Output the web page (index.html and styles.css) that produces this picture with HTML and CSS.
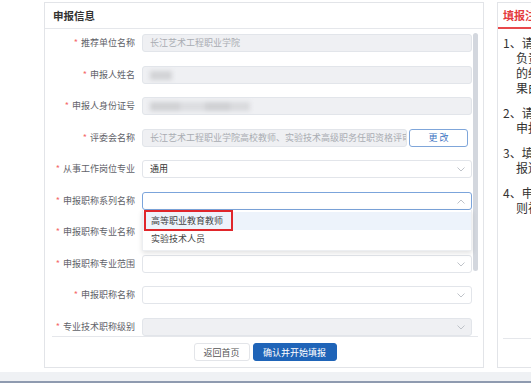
FILE: index.html
```html
<!DOCTYPE html>
<html lang="zh-CN">
<head>
<meta charset="utf-8">
<title>申报信息</title>
<link rel="stylesheet" href="styles.css">
</head>
<body>
<div class="page">
  <main class="layout">
    <section class="card form-card">
      <header class="card-head"><h2>申报信息</h2></header>
      <div class="scroll">
        <div class="form">
          <div class="row">
            <label class="label"><i>*</i>推荐单位名称</label>
            <div class="control disabled">长江艺术工程职业学院</div>
          </div>
          <div class="row">
            <label class="label"><i>*</i>申报人姓名</label>
            <div class="control disabled"><span class="blur short"></span></div>
          </div>
          <div class="row">
            <label class="label"><i>*</i>申报人身份证号</label>
            <div class="control disabled"><span class="blur long"></span></div>
          </div>
          <div class="row">
            <label class="label"><i>*</i>评委会名称</label>
            <div class="with-btn">
              <div class="control disabled">长江艺术工程职业学院高校教师、实验技术高级职务任职资格评审委员会</div>
              <button class="btn-change">更 改</button>
            </div>
          </div>
          <div class="row">
            <label class="label"><i>*</i>从事工作岗位专业</label>
            <div class="control select dark">通用<svg class="chev" viewBox="0 0 8 5"><path d="M0.5 0.5 L4 4 L7.5 0.5" /></svg></div>
          </div>
          <div class="row">
            <label class="label"><i>*</i>申报职称系列名称</label>
            <div class="control select focus"><svg class="chev" viewBox="0 0 8 5"><path d="M0.5 4.5 L4 1 L7.5 4.5" /></svg>
              <ul class="dropdown">
                <li class="hover"><span class="mark"></span>高等职业教育教师</li>
                <li>实验技术人员</li>
              </ul>
            </div>
          </div>
          <div class="row">
            <label class="label"><i>*</i>申报职称专业名称</label>
            <div class="control select"><svg class="chev" viewBox="0 0 8 5"><path d="M0.5 0.5 L4 4 L7.5 0.5" /></svg></div>
          </div>
          <div class="row">
            <label class="label"><i>*</i>申报职称专业范围</label>
            <div class="control select"><svg class="chev" viewBox="0 0 8 5"><path d="M0.5 0.5 L4 4 L7.5 0.5" /></svg></div>
          </div>
          <div class="row">
            <label class="label"><i>*</i>申报职称名称</label>
            <div class="control select"><svg class="chev" viewBox="0 0 8 5"><path d="M0.5 0.5 L4 4 L7.5 0.5" /></svg></div>
          </div>
          <div class="row">
            <label class="label"><i>*</i>专业技术职称级别</label>
            <div class="control select disabled"><svg class="chev" viewBox="0 0 8 5"><path d="M0.5 0.5 L4 4 L7.5 0.5" /></svg></div>
          </div>
        </div>
        <div class="track"><div class="thumb"></div></div>
      </div>
      <div class="actions">
        <button class="btn">返回首页</button>
        <button class="btn primary">确认并开始填报</button>
      </div>
    </section>
    <aside class="card notes">
      <header class="notes-head">填报注意事项</header>
      <ol class="note-list">
        <li>1、请认真核对申报信息，申报人对所填报信息的真实性<br>负责，如因信息填写错误导致无法正常评审<br>的结果，由申报人自行承担，后<br>果由申报人负责。</li>
        <li>2、请按照实际情况选择申报类别<br>申报系列及专业。</li>
        <li>3、填写完成后请及时提交<br>报送审核。</li>
        <li>4、申报信息确认后不可修改，否<br>则视为放弃。</li>
      </ol>
      <div class="notes-foot"></div>
    </aside>
  </main>
  <footer class="bottom"></footer>
</div>
</body>
</html>
```
FILE: styles.css
```css
html, body {
  margin: 0;
  padding: 0;
  width: 531px;
  height: 383px;
  overflow: hidden;
  background: #fff;
}
body {
  font-family: "Noto Sans CJK SC", "Noto Sans", sans-serif;
  color: #333;
}
.page {
  display: flex;
  flex-direction: column;
}
.layout {
  display: flex;
  gap: 13px;
  padding: 2px 0 0 44px;
  height: 366px;
}
.card {
  box-sizing: border-box;
  border: 1px solid #e2e4e8;
  background: #fff;
  flex-shrink: 0;
}
.form-card {
  width: 440px;
  display: flex;
  flex-direction: column;
}
.card-head {
  height: 25px;
  border-bottom: 1px solid #e5e7eb;
  padding-left: 8px;
  display: flex;
  align-items: center;
}
.card-head h2 {
  margin: 0;
  font-size: 10.5px;
  font-weight: 700;
  color: #333;
}
.scroll {
  height: 307px;
  display: flex;
  gap: 1px;
  padding: 0 5px 0 7px;
  overflow: hidden;
}
.form {
  width: 420px;
  padding-top: 5px;
  display: flex;
  flex-direction: column;
  gap: 13.5px;
}
.row {
  display: grid;
  grid-template-columns: 83px 1fr;
  column-gap: 7px;
  align-items: center;
}
.label {
  text-align: right;
  font-size: 9px;
  line-height: 18px;
  color: #5f6269;
  white-space: nowrap;
}
.label i {
  font-style: normal;
  color: #f56c6c;
  margin-right: 3px;
}
.control {
  position: relative;
  box-sizing: border-box;
  height: 18px;
  border: 1px solid #e2e5ea;
  border-radius: 3px;
  background: #fff;
  font-size: 9px;
  line-height: 16px;
  padding: 0 18px 0 7px;
  white-space: nowrap;
  overflow: hidden;
  color: #333;
}
.control.disabled {
  background: #eff0f3;
  color: #a9acb2;
}
.control.select {
  overflow: visible;
}
.control.focus {
  border-color: #7ba4db;
}
.chev {
  position: absolute;
  right: 6px;
  top: 6px;
  width: 8px;
  height: 5px;
  fill: none;
  stroke: #b8bcc3;
  stroke-width: 0.9;
}
.blur {
  display: inline-block;
  vertical-align: middle;
  height: 9px;
  background: #d2d3d6;
  filter: blur(2px);
}
.blur.short { width: 22px; }
.blur.long {
  width: 100px;
  background: linear-gradient(90deg, #d0d1d4 0 30%, #dcdde0 30% 55%, #cfd0d3 55% 80%, #d9dadd 80%);
}
.with-btn {
  display: grid;
  grid-template-columns: 265px 59px;
  column-gap: 2px;
}
.btn-change {
  box-sizing: border-box;
  height: 18px;
  border: 1px solid #7fa6da;
  border-radius: 3px;
  background: #fff;
  color: #3d73c2;
  font-family: inherit;
  font-size: 9px;
  padding: 0;
  line-height: 16px;
}
.dropdown {
  position: absolute;
  left: -1px;
  right: -1px;
  top: 17px;
  margin: 0;
  padding: 2px 0;
  list-style: none;
  background: #fff;
  box-shadow: 0 2px 5px rgba(0, 0, 0, 0.12);
  border: 1px solid #eceef1;
  border-top: none;
  z-index: 5;
}
.dropdown li {
  position: relative;
  height: 18px;
  line-height: 18px;
  padding-left: 8px;
  font-size: 9px;
  color: #444;
}
.dropdown li.hover {
  background: #edf3fb;
}
.mark {
  position: absolute;
  left: 1px;
  top: -2px;
  width: 89px;
  height: 21px;
  box-sizing: border-box;
  border: 2px solid #e0262b;
}
.track {
  width: 5px;
  padding-top: 4px;
}
.thumb {
  height: 238px;
  background: #d3d7de;
  border-radius: 3px;
}
.actions {
  margin: 0 5px 0 7px;
  border-top: 1px solid #e5e7eb;
  padding: 6px 0;
  display: flex;
  justify-content: center;
  gap: 3px;
}
.btn {
  box-sizing: border-box;
  height: 18px;
  width: 56px;
  border: 1px solid #e3e5e9;
  border-radius: 3px;
  background: #fff;
  color: #555;
  font-family: inherit;
  font-size: 9px;
  padding: 0;
}
.btn.primary {
  width: 84px;
  background: #1f64b8;
  border-color: #1f64b8;
  color: #fff;
}
.notes {
  width: 240px;
  display: flex;
  flex-direction: column;
}
.notes-head {
  height: 24px;
  border-bottom: 2px solid #e8484b;
  padding-left: 5px;
  display: flex;
  align-items: center;
  font-size: 11px;
  font-weight: 700;
  color: #e4393c;
}
.note-list {
  list-style: none;
  margin: 0;
  padding: 6px 0 0 5px;
}
.note-list li {
  font-size: 12px;
  line-height: 15px;
  color: #333;
  white-space: nowrap;
  padding-left: 13px;
  text-indent: -13px;
  margin-bottom: 10px;
}
.notes-foot {
  margin: auto 0 0 5px;
  height: 28px;
  border-top: 1px solid #e5e7eb;
}
.bottom {
  margin-top: 4px;
  height: 9px;
  background: #eff1f4;
  border-bottom: 2px solid #8f9bb0;
}
```
